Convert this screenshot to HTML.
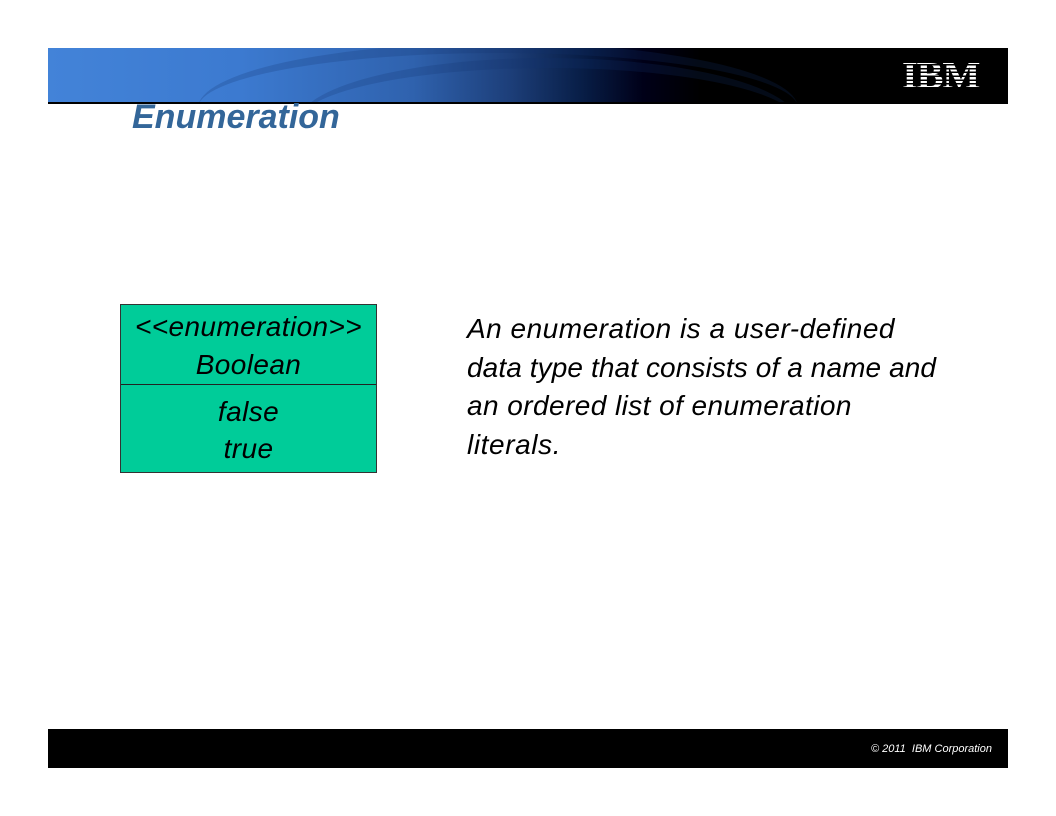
<!DOCTYPE html>
<html><head><meta charset="utf-8"><style>
body{margin:0;width:1056px;height:816px;background:#fff;position:relative;overflow:hidden;font-family:"Liberation Sans",sans-serif}
.ban{position:absolute;left:48px;top:48px;width:960px;height:54px;background:linear-gradient(90deg,#4383d8 0%,#3c7ad0 20%,#2f62ae 38%,#1d3f7a 48%,#071c44 56%,#000018 62%,#000 68%);overflow:hidden}
.sw{position:absolute;border-radius:50%;border-top:10px solid rgba(20,50,110,.22)}
.line{position:absolute;left:48px;top:102px;width:960px;height:1.5px;background:#000}
.ibm{position:absolute;left:902px;top:57px;width:76px;height:36px;font:bold 38px "Liberation Serif",serif;color:#fff;line-height:38px;transform:scaleX(1.06);transform-origin:left top;letter-spacing:-1px}
.stripe{position:absolute;left:898px;top:58px;width:86px;height:36px;background:repeating-linear-gradient(180deg,transparent 0,transparent 2.3px,#000 2.3px,#000 3.8px)}
h1{position:absolute;left:132px;top:98px;margin:0;font:italic bold 34px "Liberation Sans",sans-serif;color:#336699;letter-spacing:0}
.box{position:absolute;left:120px;top:304px;width:255px;height:167px;background:#00cc99;border:1px solid #333}
.box .d{position:absolute;left:0;top:79px;width:255px;height:1px;background:#222}
.box p{margin:0;position:absolute;left:0;width:255px;text-align:center;font:italic 28px "Liberation Sans",sans-serif;line-height:37px;color:#000;letter-spacing:0.4px}
.txt{position:absolute;left:467px;top:310px;font:italic 28px "Liberation Sans",sans-serif;line-height:38.5px;letter-spacing:0px;color:#000}
.foot{position:absolute;left:48px;top:729px;width:960px;height:39px;background:#000}
.foot span{position:absolute;right:16px;top:14px;color:#fff;font:italic 11px "Liberation Sans",sans-serif}
</style></head><body>
<div class="ban">
<div class="sw" style="left:150px;top:-5px;width:600px;height:120px"></div>
<div class="sw" style="left:250px;top:10px;width:500px;height:120px"></div>
</div>
<div class="line"></div>
<div class="ibm">IBM</div><div class="stripe"></div>
<h1>Enumeration</h1>
<div class="box">
<p style="top:3px">&lt;&lt;enumeration&gt;&gt;</p>
<p style="top:41px">Boolean</p>
<div class="d"></div>
<p style="top:88px">false</p>
<p style="top:125px">true</p>
</div>
<div class="txt"><span style="letter-spacing:0.5px">An enumeration is a user-defined</span><br><span style="letter-spacing:0.1px">data type that consists of a name and</span><br><span style="letter-spacing:0.43px">an ordered list of enumeration</span><br><span style="letter-spacing:0.6px">literals.</span></div>
<div class="foot"><span>© 2011 &nbsp;IBM Corporation</span></div>
</body></html>
